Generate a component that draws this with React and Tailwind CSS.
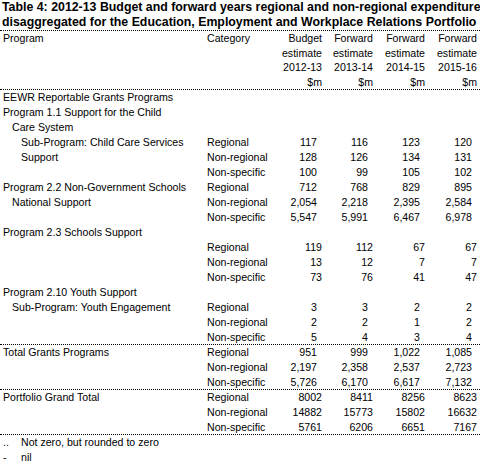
import React from 'react';

const rows = [
    { p: 'EEWR Reportable Grants Programs', i: 0 },
    { p: 'Program 1.1 Support for the Child', i: 0 },
    { p: 'Care System', i: 1 },
    { p: 'Sub-Program: Child Care Services', i: 2, c: 'Regional', v: ['117', '116', '123', '120'] },
    { p: 'Support', i: 2, c: 'Non-regional', v: ['128', '126', '134', '131'] },
    { c: 'Non-specific', v: ['100', '99', '105', '102'] },
    { p: 'Program 2.2 Non-Government Schools', i: 0, c: 'Regional', v: ['712', '768', '829', '895'] },
    { p: 'National Support', i: 1, c: 'Non-regional', v: ['2,054', '2,218', '2,395', '2,584'] },
    { c: 'Non-specific', v: ['5,547', '5,991', '6,467', '6,978'] },
    { p: 'Program 2.3 Schools Support', i: 0 },
    { c: 'Regional', v: ['119', '112', '67', '67'], flush: true },
    { c: 'Non-regional', v: ['13', '12', '7', '7'], flush: true },
    { c: 'Non-specific', v: ['73', '76', '41', '47'], flush: true },
    { p: 'Program 2.10 Youth Support', i: 0 },
    { p: 'Sub-Program: Youth Engagement', i: 1, c: 'Regional', v: ['3', '3', '2', '2'] },
    { c: 'Non-regional', v: ['2', '2', '1', '2'] },
    { c: 'Non-specific', v: ['5', '4', '3', '4'], line: true },
    { p: 'Total Grants Programs', i: 0, c: 'Regional', v: ['951', '999', '1,022', '1,085'] },
    { c: 'Non-regional', v: ['2,197', '2,358', '2,537', '2,723'] },
    { c: 'Non-specific', v: ['5,726', '6,170', '6,617', '7,132'], line: true },
    { p: 'Portfolio Grand Total', i: 0, c: 'Regional', v: ['8002', '8411', '8256', '8623'], flush: true },
    { c: 'Non-regional', v: ['14882', '15773', '15802', '16632'], flush: true },
    { c: 'Non-specific', v: ['5761', '6206', '6651', '7167'], flush: true, line: true },
];

const indents = ['pl-[3px]', 'pl-[12px]', 'pl-[21px]'];

const heads = [
    ['Budget', 'estimate', '2012-13', '$m'],
    ['Forward', 'estimate', '2013-14', '$m'],
    ['Forward', 'estimate', '2014-15', '$m'],
    ['Forward', 'estimate', '2015-16', '$m'],
];

const grid = 'grid grid-cols-[204px_66px_52px_51px_52px_52px]';

const App = () => {
    return (
        <div className="w-[480px] h-[465px] bg-white text-black text-[10.6px] leading-[15px] font-['Liberation_Sans',Arial,sans-serif] overflow-hidden">
            {/* Title */}
            <div className="h-[31px] border-b border-dotted border-black pl-[2px] font-bold text-[12.35px] whitespace-nowrap">
                <div className="h-[15px]">Table 4: 2012-13 Budget and forward years regional and non-regional expenditure</div>
                <div className="h-[15px]">disaggregated for the Education, Employment and Workplace Relations Portfolio</div>
            </div>

            {/* Header */}
            <div className={`${grid} h-[59px] border-b border-dotted border-black leading-[14.5px]`}>
                <div className="pl-[3px]">Program</div>
                <div className="pl-[3px]">Category</div>
                {heads.map((h, k) => (
                    <div key={k} className="text-right">
                        {h.map((t, j) => <div key={j}>{t}</div>)}
                    </div>
                ))}
            </div>

            {/* Body */}
            {rows.map((r, k) => (
                <div key={k} className={`${grid} h-[15px] whitespace-nowrap ${r.line ? 'border-b border-dotted border-black' : ''}`}>
                    <div className={indents[r.i || 0]}>{r.p}</div>
                    <div className="pl-[3px]">{r.c}</div>
                    {(r.v || ['', '', '', '']).map((n, j) => (
                        <div key={j} className={`text-right ${r.flush ? '' : 'pr-[5px]'}`}>{n}</div>
                    ))}
                </div>
            ))}

            {/* Notes */}
            <div className="flex h-[15px]">
                <span className="w-[21px] pl-[3px]">..</span>
                <span>Not zero, but rounded to zero</span>
            </div>
            <div className="flex h-[15px]">
                <span className="w-[21px] pl-[3px]">-</span>
                <span>nil</span>
            </div>
        </div>
    );
};

export default App;
